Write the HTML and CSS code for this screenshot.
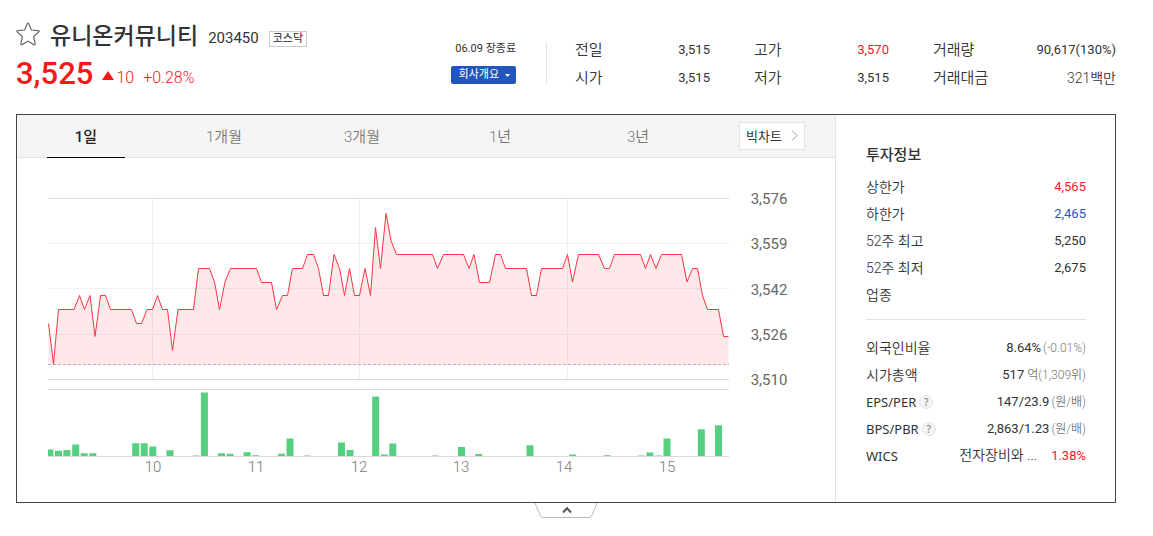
FILE: index.html
```html
<!DOCTYPE html>
<html lang="ko">
<head>
<meta charset="utf-8">
<meta name="viewport" content="width=device-width, initial-scale=1">
<title>유니온커뮤니티 203450</title>
<link rel="stylesheet" href="styles.css">
</head>
<body>
<main class="stock">
  <header class="summary">
    <div class="identity">
      <div class="name-row">
        <button class="star" type="button" aria-label="관심종목">
          <svg width="24" height="26" viewBox="0 0 24 26"><path d="M12 2 Q12.5 2 12.9 3 L15.4 9 L22 9.6 Q23.8 9.9 22.8 10.9 L17.6 15.5 L19.1 22.6 Q19.2 24.3 17.7 23.6 L12 20.1 L6.1 23.6 Q4.7 24.2 4.9 22.6 L6.4 15.5 L1.2 10.9 Q0.4 9.9 1.9 9.6 L8.6 9 L11.1 3 Q11.5 2 12 2Z" fill="none" stroke="#666" stroke-width="1.2"/></svg>
        </button>
        <h1 class="name">유니온커뮤니티</h1>
        <span class="code">203450</span>
        <span class="market">코스닥</span>
      </div>
      <div class="price-row">
        <strong class="price">3,525</strong>
        <svg class="up" width="12" height="9" viewBox="0 0 12 9" aria-label="상승"><path d="M6 0 L12 9 H0Z" fill="#f51919"/></svg>
        <span class="diff">10</span>
        <span class="rate">+0.28%</span>
      </div>
    </div>
    <div class="status">
      <span class="time">06.09 장종료</span>
      <button class="overview" type="button">회사개요 <svg width="5" height="3" viewBox="0 0 5 3"><path d="M0 0H5L2.5 3Z" fill="#fff"/></svg></button>
    </div>
    <div class="quotes">
      <dl class="quote-col">
        <div><dt>전일</dt><dd>3,515</dd></div>
        <div><dt>시가</dt><dd>3,515</dd></div>
      </dl>
      <dl class="quote-col">
        <div><dt>고가</dt><dd class="red">3,570</dd></div>
        <div><dt>저가</dt><dd>3,515</dd></div>
      </dl>
      <dl class="quote-col wide">
        <div><dt>거래량</dt><dd>90,617(130%)</dd></div>
        <div><dt>거래대금</dt><dd class="amount">321백만</dd></div>
      </dl>
    </div>
  </header>

  <section class="panel">
    <div class="chart-side">
      <nav class="tabs">
        <button class="tab active" type="button">1일</button>
        <button class="tab" type="button">1개월</button>
        <button class="tab" type="button">3개월</button>
        <button class="tab" type="button">1년</button>
        <button class="tab" type="button">3년</button>
        <a class="big-chart" href="#">빅차트 <svg width="7" height="11" viewBox="0 0 7 11"><path d="M1 .5 L6 5.5 L1 10.5" fill="none" stroke="#999"/></svg></a>
      </nav>
      <svg class="chart" viewBox="17 158 818 344" role="img" aria-label="1일 주가 차트">
        <g class="grid">
          <path class="minor" d="M48 243.5H729M48 288.5H729M48 334.5H729M152.5 199V379M359.5 199V379M567.5 199V379"/>
          <path class="major" d="M48 198.5H729M48 379.5H729M48 389.5H729"/>
        </g>
        <path class="base" d="M48 364.5H729"/>
        <path class="area" d="M48.5 364.5V323.5L53.5 364L58.5 309.5H74L79.5 295.5L84.5 309.5L90 295.5L95 336.5L100.5 295.5H105.5L110.5 309.5H131.5L136.5 323.5H141.5L147 309.5H152.5L157.5 295.5L162.5 309.5H167.5L172.5 350.5L178 309.5H193.5L198.5 268.5H209.5L214.5 282L219.5 309.5L225 282L230.5 268.5H256.5L261.5 282.5H271.5L276.5 309.5L282.5 295.5H287.5L292.5 268.5H302.5L307.5 254.5H313.5L318.5 268.5L323.5 295.5H328.5L334 254.5L339.5 268.5L344.5 295.5L349.5 268.5L354.5 295.5H359.5L365 268.5L370.5 295.5L375.5 227.5L380.5 268.5L386 213.5L391 240.5L396.5 254.5H432.5L437.5 268.5L443.5 254.5H463.5L469 268.5L474 254.5L479.5 282.5H489.5L495.5 254.5H500.5L505.5 268.5H526.5L531.5 295.5H536.5L541.5 268.5H562.5L567.5 254.5L572.5 282L578.5 254.5H598.5L604.5 268.5H609.5L614.5 254.5H640.5L645.5 268.5L650.5 254.5L656 268.5L661.5 254.5H681.5L687 282L692.5 268.5H697.5L702.5 295.5L707.5 309.5H718.5L723.5 336.5H728.5V364.5Z"/>
        <path class="line" d="M48.5 323.5L53.5 364L58.5 309.5H74L79.5 295.5L84.5 309.5L90 295.5L95 336.5L100.5 295.5H105.5L110.5 309.5H131.5L136.5 323.5H141.5L147 309.5H152.5L157.5 295.5L162.5 309.5H167.5L172.5 350.5L178 309.5H193.5L198.5 268.5H209.5L214.5 282L219.5 309.5L225 282L230.5 268.5H256.5L261.5 282.5H271.5L276.5 309.5L282.5 295.5H287.5L292.5 268.5H302.5L307.5 254.5H313.5L318.5 268.5L323.5 295.5H328.5L334 254.5L339.5 268.5L344.5 295.5L349.5 268.5L354.5 295.5H359.5L365 268.5L370.5 295.5L375.5 227.5L380.5 268.5L386 213.5L391 240.5L396.5 254.5H432.5L437.5 268.5L443.5 254.5H463.5L469 268.5L474 254.5L479.5 282.5H489.5L495.5 254.5H500.5L505.5 268.5H526.5L531.5 295.5H536.5L541.5 268.5H562.5L567.5 254.5L572.5 282L578.5 254.5H598.5L604.5 268.5H609.5L614.5 254.5H640.5L645.5 268.5L650.5 254.5L656 268.5L661.5 254.5H681.5L687 282L692.5 268.5H697.5L702.5 295.5L707.5 309.5H718.5L723.5 336.5H728.5"/>
        <path class="bars" d="M48 456V449.5h5.4V456zM55 456V450.8h7V456zM63.4 456V450h7V456zM72.2 456V444.5h7V456zM80.7 456V453.2h7V456zM89.3 456V453.2h7V456zM132.2 456V443.3h7V456zM140.7 456V443.3h7V456zM149.3 456V446.5h7V456zM166.5 456V450.3h7V456zM192.2 456V455.4h7V456zM200.9 456V392.4h7V456zM218 456V453.2h7V456zM226.5 456V453.8h7V456zM243.6 456V452.2h7V456zM252.2 456V455.2h7V456zM278 456V453.8h7V456zM286.5 456V438.4h7V456zM304 456V455.6h7V456zM338 456V442.5h7V456zM346.5 456V450h7V456zM372.2 456V396.5h7V456zM380.8 456V454.5h7V456zM389.3 456V443.4h7V456zM432 456V455.6h7V456zM458 456V447h7V456zM475.2 456V454h7V456zM526.5 456V445.3h7V456zM569.2 456V454.5h7V456zM603.6 456V455.3h7V456zM637.8 456V455.5h7V456zM646.4 456V452.4h7V456zM655 456V455.5h7V456zM663.5 456V438.4h7V456zM697.8 456V429.3h7V456zM715 456V425.3h7V456z"/>
        <path class="axis" d="M48 456.5H729"/>
        <g class="y-labels">
          <text x="769" y="204">3,576</text><text x="769" y="249">3,559</text><text x="769" y="295">3,542</text><text x="769" y="340">3,526</text><text x="769" y="385">3,510</text>
        </g>
        <g class="x-labels">
          <text x="153" y="472">10</text><text x="256" y="472">11</text><text x="359" y="472">12</text><text x="461" y="472">13</text><text x="564" y="472">14</text><text x="667" y="472">15</text>
        </g>
      </svg>
    </div>
    <aside class="info">
      <h2 class="info-title">투자정보</h2>
      <dl class="facts">
        <div><dt>상한가</dt><dd class="red">4,565</dd></div>
        <div><dt>하한가</dt><dd class="blue">2,465</dd></div>
        <div><dt>52주 최고</dt><dd>5,250</dd></div>
        <div><dt>52주 최저</dt><dd>2,675</dd></div>
        <div><dt>업종</dt><dd></dd></div>
      </dl>
      <dl class="facts more">
        <div><dt>외국인비율</dt><dd>8.64%<small>(-0.01%)</small></dd></div>
        <div><dt>시가총액</dt><dd>517<small class="unit">억(1,309위)</small></dd></div>
        <div><dt class="latin">EPS/PER<button class="help" type="button" aria-label="EPS/PER 도움말">?</button></dt><dd>147/23.9<small>(원/배)</small></dd></div>
        <div><dt class="latin">BPS/PBR<button class="help" type="button" aria-label="BPS/PBR 도움말">?</button></dt><dd>2,863/1.23<small>(원/배)</small></dd></div>
        <div><dt class="latin">WICS</dt><dd><a class="sector" href="#">전자장비와 ...</a><span class="red">1.38%</span></dd></div>
      </dl>
    </aside>
  </section>
  <button class="fold" type="button" aria-label="접기">
    <svg width="64" height="16" viewBox="0 0 64 16"><path d="M1 0 L6 12 Q7 14.5 9 14.5 H55 Q57 14.5 58 12 L63 0" fill="#fff" stroke="#bbb"/><path d="M29 9.5 L33 5.2 L37 9.5" fill="none" stroke="#555" stroke-width="2"/></svg>
  </button>
</main>
</body>
</html>
```
FILE: styles.css
```css
* { box-sizing: border-box; }
body {
  margin: 0;
  background: #fff;
  color: #333;
  font-family: Roboto, "Noto Sans CJK KR", sans-serif;
  font-size: 14px;
}
h1, h2, dl, dd { margin: 0; }
button { margin: 0; padding: 0; border: 0; background: none; color: inherit; font: inherit; }
a { color: inherit; text-decoration: none; }
svg { display: block; }
.red { color: #f51919; }
.blue { color: #2a55c6; }

.stock { padding: 20px 37px 0 16px; }
.summary { display: flex; align-items: flex-start; padding-bottom: 18px; }
.identity { flex: 1; }
.name-row { display: flex; align-items: center; height: 32px; }
.star { margin: 0 10px 4px 0; }
.name { padding-top: 2px; font-size: 23px; font-weight: 500; line-height: 32px; }
.code { margin: 3px 0 0 10px; font-size: 15px; }
.market {
  margin: 6px 0 0 10px;
  padding: 0 3px;
  border: 1px solid #ccc;
  font-size: 11px;
  line-height: 14px;
  color: #222;
}
.price-row { display: flex; align-items: center; height: 44px; padding-bottom: 2px; color: #f51919; }
.price { font-size: 31px; font-weight: 500; }
.up { margin: 4px 2px 0 9px; }
.diff, .rate { margin-top: 8px; font-size: 16px; font-weight: 350; }
.rate { margin-left: 9px; }

.status { display: flex; flex-direction: column; align-items: flex-end; gap: 10px; margin-top: 22px; }
.time { font-size: 11px; line-height: 14px; }
.overview {
  display: flex;
  align-items: center;
  gap: 6px;
  padding: 0 6px 0 8px;
  border-radius: 2px;
  background: #2157bd;
  color: #fff;
  font-size: 11px;
  line-height: 18px;
}
.quotes {
  position: relative;
  display: flex;
  gap: 44px;
  margin: 16px 0 0 30px;
  padding-left: 29px;
  line-height: 28px;
}
.quotes::before {
  content: "";
  position: absolute;
  left: 0;
  top: 6px;
  bottom: 8px;
  border-left: 1px solid #e3e3e8;
}
.quote-col { width: 135px; }
.quote-col.wide { width: 183px; }
.quote-col div, .facts div { display: flex; justify-content: space-between; }
.quote-col div { height: 28px; }
.quote-col dt { font-size: 15px; font-weight: 350; }
.quote-col dd, .facts dd { font-size: 13px; }
.quote-col .amount { font-size: 14px; font-weight: 350; }

.panel { display: flex; border: 1px solid #444; }
.chart-side { flex: 1; min-width: 0; }
.tabs {
  display: flex;
  align-items: center;
  height: 43px;
  padding: 0 30px;
  border-bottom: 1px solid #e3e3e8;
  background: #f5f5f5;
}
.tab {
  flex: 0 0 78px;
  align-self: stretch;
  margin: 0 60px -1px 0;
  padding-bottom: 3px;
  color: #777;
  font-size: 15px;
  font-weight: 350;
}
.tab.active { padding-bottom: 2px; border-bottom: 1px solid #000; color: #222; font-weight: 500; }
.big-chart {
  display: flex;
  align-items: center;
  gap: 9px;
  flex: none;
  height: 28px;
  margin-left: auto;
  padding: 0 6px 2px;
  border: 1px solid #e3e3e8;
  background: #fff;
  font-size: 13px;
  white-space: nowrap;
}
.chart { width: 100%; height: auto; }
.minor { fill: none; stroke: #f0f0f2; }
.major, .axis { fill: none; stroke: #dadae5; }
.area { fill: #f5192d; fill-opacity: .1; }
.base { stroke: #b9b5c2; stroke-dasharray: 3 2; }
.line { fill: none; stroke: #ff3344; }
.bars { fill: #55d080; }
.chart text { font-size: 15px; text-anchor: middle; }
.y-labels { fill: #666; }
.x-labels { fill: #777; font-weight: 300; }

.info { flex: 0 0 280px; padding: 27px 29px 32px 30px; border-left: 1px solid #e3e3e8; line-height: 27px; }
.info-title { margin-bottom: 4px; font-size: 15px; font-weight: 500; }
.facts div { height: 27px; }
.facts dt { display: flex; align-items: center; padding-top: 1px; font-weight: 350; }
.facts .latin { font-family: "Noto Sans", sans-serif; font-size: 13px; font-weight: 400; }
.facts small { margin-left: 2px; color: #777; font-size: 12px; font-weight: 350; }
.facts small.unit { margin-left: 3px; }
.more { margin-top: 11px; padding-top: 14px; border-top: 1px solid #e3e3e3; }
.help {
  width: 14px;
  height: 14px;
  margin-left: 3px;
  border: 1px solid #e3e3e3;
  border-radius: 50%;
  background: #f5f5f5;
  color: #888;
  font-size: 10px;
  font-weight: 500;
  line-height: 12px;
}
.sector { margin-right: 14px; font-size: 14px; font-weight: 350; }
.fold { display: block; margin: 0 auto; }
```
